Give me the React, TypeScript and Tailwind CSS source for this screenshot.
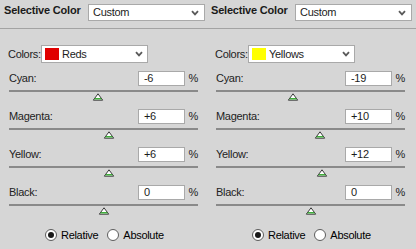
type Adj = { name: string; value: string; num: number };

const Chevron = () => (
  <svg width="8" height="6" viewBox="0 0 8 6" className="shrink-0">
    <path d="M1 1.2 L4 4.4 L7 1.2" fill="none" stroke="#5a5a5a" strokeWidth="1.8" />
  </svg>
);

const Thumb = () => (
  <svg width="11" height="8" viewBox="0 0 11 8">
    <polygon points="5.5,0.8 10.2,7.2 0.8,7.2" fill="#ffffff" stroke="#3a3a3a" strokeWidth="1" />
    <polygon points="2.6,5 8.4,5 9.4,6.6 1.6,6.6" fill="#3fae3a" />
  </svg>
);

const Radio = ({ checked, label }: { checked?: boolean; label: string }) => (
  <label className="flex items-center gap-[4px]">
    <span className="flex h-[12px] w-[12px] items-center justify-center rounded-full border border-[#5c5c5c] bg-white">
      {checked && <span className="h-[6px] w-[6px] rounded-full bg-[#1a1a1a]" />}
    </span>
    <span>{label}</span>
  </label>
);

const Row = ({ adj }: { adj: Adj }) => (
  <div className="h-[38px]">
    <div className="flex h-[15px] items-center">
      <span className="flex-1 text-[#222]">{adj.name}</span>
      <div className="flex h-[15px] w-[47px] items-center border border-[#a9a9a9] bg-white pl-[5px] text-[#1c1c1c]">
        {adj.value}
      </div>
      <span className="w-[13px] text-right text-[#222]">%</span>
    </div>
    <div className="mt-[4px] h-[2px] bg-[#8a8a8a]" />
    <div className="relative h-[10px]">
      <div
        className="absolute top-[1px] -translate-x-1/2"
        style={{ left: `${50 + adj.num / 2}%` }}
      >
        <Thumb />
      </div>
    </div>
  </div>
);

const Panel = ({ colorName, swatch, adjs }: { colorName: string; swatch: string; adjs: Adj[] }) => (
  <div className="w-[207px] px-[9px] pt-[16px]">
    <div className="-ml-px flex h-[18px] items-center">
      <span className="w-[33px] whitespace-nowrap text-[#222]">Colors:</span>
      <div className="flex h-[18px] w-[107px] items-center border border-[#a9a9a9] bg-white pl-[3px] pr-[4px]">
        <span className="h-[12px] w-[14px]" style={{ background: swatch }} />
        <span className="ml-[3px] flex-1 text-[#1c1c1c]">{colorName}</span>
        <Chevron />
      </div>
    </div>
    <div className="mt-[8px]">
      {adjs.map((a) => (
        <Row key={a.name} adj={a} />
      ))}
    </div>
    <div className="mt-[6px] flex gap-[9px] pl-[36px]">
      <Radio checked label="Relative" />
      <Radio label="Absolute" />
    </div>
  </div>
);

const Header = () => (
  <div className="flex h-[28px] w-[207px] items-start pl-[4px] pt-[4px]">
    <span className="mt-[1px] w-[84px] whitespace-nowrap text-[11px] font-bold tracking-[-0.2px] text-[#1a1a1a]">
      Selective Color
    </span>
    <div className="flex h-[17px] w-[117px] items-center border border-[#a9a9a9] bg-white pl-[4px] pr-[5px]">
      <span className="flex-1 text-[#1c1c1c]">Custom</span>
      <Chevron />
    </div>
  </div>
);

export default function App() {
  const left: Adj[] = [
    { name: "Cyan:", value: "-6", num: -6 },
    { name: "Magenta:", value: "+6", num: 6 },
    { name: "Yellow:", value: "+6", num: 6 },
    { name: "Black:", value: "0", num: 0 },
  ];
  const right: Adj[] = [
    { name: "Cyan:", value: "-19", num: -19 },
    { name: "Magenta:", value: "+10", num: 10 },
    { name: "Yellow:", value: "+12", num: 12 },
    { name: "Black:", value: "0", num: 0 },
  ];

  return (
    <div className="h-[249px] w-[416px] overflow-hidden bg-[#d6d6d6] font-['Liberation_Sans',sans-serif] text-[11px] leading-none tracking-[-0.3px]">
      <div className="flex">
        <Header />
        <Header />
      </div>
      <div className="h-px bg-[#a3a3a3]" />
      <div className="flex">
        <Panel colorName="Reds" swatch="#e00000" adjs={left} />
        <Panel colorName="Yellows" swatch="#ffff00" adjs={right} />
      </div>
    </div>
  );
}
